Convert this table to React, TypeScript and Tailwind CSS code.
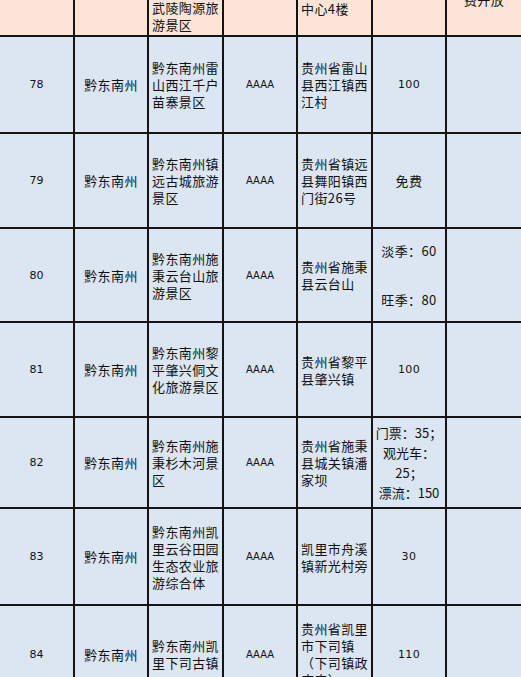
import React from "react"

type Row = {
  no: string
  h: string
  name: string[]
  addr: string[]
  price: React.ReactNode
}

const cjk = "font-['Noto_Sans_CJK_SC','Noto_Sans',sans-serif]"

const rows: Row[] = [
  {
    no: "78",
    h: "h-[97px]",
    name: ["黔东南州雷", "山西江千户", "苗寨景区"],
    addr: ["贵州省雷山", "县西江镇西", "江村"],
    price: <span className="font-['DejaVu_Sans',sans-serif] text-[11px]">100</span>,
  },
  {
    no: "79",
    h: "h-[95px]",
    name: ["黔东南州镇", "远古城旅游", "景区"],
    addr: ["贵州省镇远", "县舞阳镇西", "门街26号"],
    price: <span>免费</span>,
  },
  {
    no: "80",
    h: "h-[94px]",
    name: ["黔东南州施", "秉云台山旅", "游景区"],
    addr: ["贵州省施秉", "县云台山"],
    price: (
      <div className="flex flex-col items-center gap-[32px]">
        <span>淡季：60</span>
        <span>旺季：80</span>
      </div>
    ),
  },
  {
    no: "81",
    h: "h-[95px]",
    name: ["黔东南州黎", "平肇兴侗文", "化旅游景区"],
    addr: ["贵州省黎平", "县肇兴镇"],
    price: <span className="font-['DejaVu_Sans',sans-serif] text-[11px]">100</span>,
  },
  {
    no: "82",
    h: "h-[91px]",
    name: ["黔东南州施", "秉杉木河景", "区"],
    addr: ["贵州省施秉", "县城关镇潘", "家坝"],
    price: (
      <div className="flex flex-col items-center whitespace-nowrap leading-[20px] tracking-normal">
        <span>门票：35；</span>
        <span>观光车：</span>
        <span>25；</span>
        <span>漂流：150</span>
      </div>
    ),
  },
  {
    no: "83",
    h: "h-[97px]",
    name: ["黔东南州凯", "里云谷田园", "生态农业旅", "游综合体"],
    addr: ["凯里市舟溪", "镇新光村旁"],
    price: <span className="font-['DejaVu_Sans',sans-serif] text-[11px]">30</span>,
  },
  {
    no: "84",
    h: "h-[98px]",
    name: ["黔东南州凯", "里下司古镇"],
    addr: ["贵州省凯里", "市下司镇", "（下司镇政", "府内）"],
    price: <span className="font-['DejaVu_Sans',sans-serif] text-[11px]">110</span>,
  },
]

const grid = "grid grid-cols-[75px_74px_75px_74px_75px_74px_74px]"
const cell = "flex min-h-0 border-r-2 border-b-2 border-[#141414] overflow-hidden"

function Lines({ lines }: { lines: string[] }) {
  return (
    <div className="flex flex-col">
      {lines.map((l, i) => (
        <span key={i} className="whitespace-nowrap">
          {l}
        </span>
      ))}
    </div>
  )
}

export default function App() {
  return (
    <div
      className={`h-[677px] w-[521px] overflow-hidden bg-[#dce6f2] text-[13px] leading-[17px] tracking-[0.4px] text-[#111] ${cjk}`}
    >
      {/* header row, cut off by the top edge */}
      <div className={`${grid} h-[37px] grid-rows-[37px] bg-[#fce4d6]`}>
        <div className={cell} />
        <div className={cell} />
        <div className={`${cell} items-end pb-[2px] pl-[3px]`}>
          <Lines lines={["武陵陶源旅", "游景区"]} />
        </div>
        <div className={cell} />
        <div className={`${cell} items-end pb-[18px] pl-[3px]`}>
          <Lines lines={["中心4楼"]} />
        </div>
        <div className={cell} />
        <div className="flex min-h-0 items-end justify-center overflow-hidden border-b-2 border-[#141414] pb-[18px]">
          <span className="-translate-y-[9px] whitespace-nowrap">费开放</span>
        </div>
      </div>

      {rows.map((r) => (
        <div key={r.no} className={`${grid} ${r.h}`}>
          <div className={`${cell} items-center justify-center font-['DejaVu_Sans',sans-serif] text-[11px] tracking-normal`}>
            {r.no}
          </div>
          <div className={`${cell} items-center justify-center`}>黔东南州</div>
          <div className={`${cell} items-center pl-[3px]`}>
            <Lines lines={r.name} />
          </div>
          <div className={`${cell} items-center justify-center font-['DejaVu_Sans',sans-serif] text-[10px] tracking-normal`}>
            AAAA
          </div>
          <div className={`${cell} items-center pl-[3px]`}>
            <Lines lines={r.addr} />
          </div>
          <div className={`${cell} items-center justify-center`}>{r.price}</div>
          <div className="border-b-2 border-[#141414]" />
        </div>
      ))}
    </div>
  )
}
